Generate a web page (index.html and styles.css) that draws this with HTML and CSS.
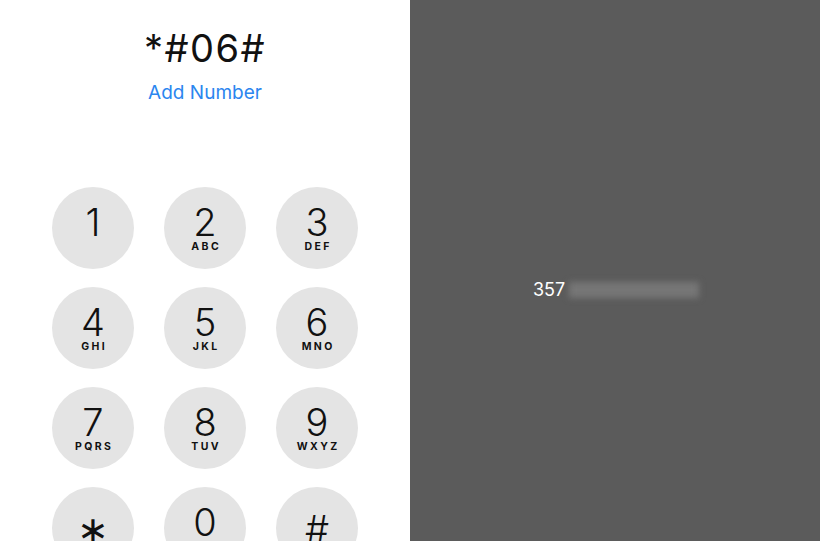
FILE: index.html
```html
<!DOCTYPE html>
<html>
<head>
<meta charset="utf-8">
<link rel="stylesheet" href="styles.css">
</head>
<body>
<div class="page">
  <div class="dialer">
    <div class="entry">*#06#</div>
    <div class="add">Add Number</div>
    <div class="pad">
      <div class="key"><span class="d">1</span><span class="l"></span></div>
      <div class="key"><span class="d">2</span><span class="l">ABC</span></div>
      <div class="key"><span class="d">3</span><span class="l">DEF</span></div>
      <div class="key"><span class="d">4</span><span class="l">GHI</span></div>
      <div class="key"><span class="d">5</span><span class="l">JKL</span></div>
      <div class="key"><span class="d">6</span><span class="l">MNO</span></div>
      <div class="key"><span class="d">7</span><span class="l">PQRS</span></div>
      <div class="key"><span class="d">8</span><span class="l">TUV</span></div>
      <div class="key"><span class="d">9</span><span class="l">WXYZ</span></div>
      <div class="key"><span class="d sym">∗</span><span class="l"></span></div>
      <div class="key"><span class="d">0</span><span class="l"></span></div>
      <div class="key"><span class="d sym">#</span><span class="l"></span></div>
    </div>
  </div>
  <div class="result">
    <div class="imei"><span class="num">357</span><span class="blur"></span></div>
  </div>
</div>
</body>
</html>
```
FILE: styles.css
```css
html, body { margin: 0; padding: 0; }
body { width: 820px; height: 541px; overflow: hidden; font-family: Inter, "Liberation Sans", sans-serif; }
.page { display: flex; width: 820px; height: 541px; overflow: hidden; }
.dialer { width: 410px; background: #fff; display: flex; flex-direction: column; align-items: center; overflow: hidden; }
.entry { margin-top: 26px; font-size: 38px; font-weight: 400; color: #111; letter-spacing: 1.5px; line-height: 44px; height: 44px; }
.add { margin-top: 11px; font-size: 19px; color: #2b86ef; line-height: 24px; }
.pad { margin-top: 82px; display: grid; grid-template-columns: repeat(3, 82px); column-gap: 30px; row-gap: 18px; }
.key { width: 82px; height: 82px; border-radius: 50%; background: #e4e4e4; display: flex; flex-direction: column; align-items: center; }
.d { margin-top: 15px; font-size: 38px; font-weight: 300; color: #111; line-height: 40px; height: 40px; }
.d.sym { margin-top: 22px; }
.l { margin-top: -1px; font-size: 10.5px; font-weight: 700; letter-spacing: 2.4px; margin-right: -2.4px; color: #111; line-height: 12px; height: 12px; }
.result { flex: 1; background: #5b5b5b; display: flex; align-items: center; }
.imei { margin-left: 123px; margin-top: 38px; display: flex; align-items: center; }
.num { font-size: 18px; color: #fff; }
.blur { width: 130px; height: 16px; margin-left: 4px; background: #767676; filter: blur(3px); }
```
